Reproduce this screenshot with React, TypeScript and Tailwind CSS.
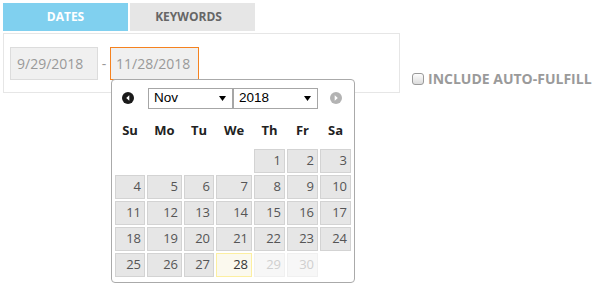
import React from "react";

const cols = ["w-[30px]", "w-[35px]", "w-[30px]", "w-[36px]", "w-[31px]", "w-[31px]", "w-[31px]"];
const heads = ["Su", "Mo", "Tu", "We", "Th", "Fr", "Sa"];

type Cell = { d: number | null; kind?: "normal" | "today" | "disabled" };

function buildRows(): Cell[][] {
  const cells: Cell[] = [];
  for (let i = 0; i < 4; i++) cells.push({ d: null });
  for (let d = 1; d <= 30; d++) {
    cells.push({ d, kind: d === 28 ? "today" : d > 28 ? "disabled" : "normal" });
  }
  while (cells.length % 7) cells.push({ d: null });
  const rows: Cell[][] = [];
  for (let i = 0; i < cells.length; i += 7) rows.push(cells.slice(i, i + 7));
  return rows;
}

function Arrow({ dir, color }: { dir: "l" | "r"; color: string }) {
  return (
    <svg width="12" height="12" viewBox="0 0 12 12">
      <circle cx="6" cy="6" r="6" fill={color} />
      {dir === "l" ? (
        <polygon points="7.3,3.3 7.3,8.7 4.2,6" fill="#fff" />
      ) : (
        <polygon points="4.7,3.3 4.7,8.7 7.8,6" fill="#fff" />
      )}
    </svg>
  );
}

function FakeSelect({ label, w }: { label: string; w: string }) {
  return (
    <div
      className={`${w} h-[21px] border border-[#a6a6a6] bg-white flex items-center justify-between pl-[5px] pr-[6px] text-[13.5px] text-black`}
      style={{ fontFamily: '"Liberation Sans", Arial, sans-serif' }}
    >
      <span>{label}</span>
      <svg width="7" height="5" viewBox="0 0 7 5">
        <polygon points="0,0 7,0 3.5,5" fill="#000" />
      </svg>
    </div>
  );
}

export default function App() {
  const rows = buildRows();
  return (
    <div
      className="w-[596px] h-[284px] bg-white relative overflow-hidden pl-[3px] pt-[3px]"
      style={{ fontFamily: '"Open Sans", sans-serif' }}
    >
      <div className="flex gap-[2px]">
        <div className="w-[125px] h-[28px] bg-[#80d0ef] text-white font-bold text-[12px] flex items-center justify-center">
          DATES
        </div>
        <div className="w-[125px] h-[28px] bg-[#e6e6e6] text-[#666] font-bold text-[12px] flex items-center justify-center pr-[8px]">
          KEYWORDS
        </div>
      </div>
      <div className="flex mt-[2px]">
        <div className="w-[397px] h-[60px] border border-[#e6e6e6] pl-[6px] pt-[13px] flex items-start relative">
          <div className="w-[88px] h-[33px] bg-[#f0f0f0] border border-[#dcdcdc] pl-[6px] flex items-center text-[14px] text-[#999]">
            9/29/2018
          </div>
          <div className="w-[12px] h-[33px] flex items-center justify-center text-[14px] text-[#999]">-</div>
          <div className="w-[89px] h-[33px] bg-[#f0f0f0] border border-[#f5821f] pl-[5px] flex items-center text-[14px] text-[#999]">
            11/28/2018
          </div>

          {/* datepicker popup */}
          <div className="absolute left-[107px] top-[45px] z-10 w-[244px] border border-[#aaa] rounded-[4px] bg-white p-[3px]">
            <div className="relative h-[30px] flex items-center">
              <div className="absolute left-[7px] top-[9px]">
                <Arrow dir="l" color="#1a1a1a" />
              </div>
              <div className="absolute left-[33px] top-[5px] flex">
                <FakeSelect label="Nov" w="w-[85px]" />
                <FakeSelect label="2018" w="w-[85px]" />
              </div>
              <div className="absolute left-[215px] top-[9px]">
                <Arrow dir="r" color="#b3b3b3" />
              </div>
            </div>
            <div className="flex gap-[2px] h-[36px] items-center">
              {heads.map((h, i) => (
                <div key={h} className={`${cols[i]} text-center font-bold text-[13px] text-[#222]`}>
                  {h}
                </div>
              ))}
            </div>
            <div className="flex flex-col gap-[2px] mb-[2px]">
              {rows.map((r, ri) => (
                <div key={ri} className="flex gap-[2px]">
                  {r.map((c, ci) => {
                    if (c.d === null) return <div key={ci} className={`${cols[ci]} h-[24px]`} />;
                    const base = `${cols[ci]} h-[24px] border flex items-center justify-end pr-[3px] text-[13px]`;
                    const cls =
                      c.kind === "today"
                        ? "bg-[#fbf9ee] border-[#fcefa1] text-[#363636]"
                        : c.kind === "disabled"
                        ? "bg-[#f7f7f7] border-[#f0f0f0] text-[#cfcfcf]"
                        : "bg-[#e6e6e6] border-[#d3d3d3] text-[#555]";
                    return (
                      <div key={ci} className={`${base} ${cls}`}>
                        {c.d}
                      </div>
                    );
                  })}
                </div>
              ))}
            </div>
          </div>
        </div>
        <div className="ml-[12px] mt-[39px] flex items-center h-[13px]">
          <div className="w-[12px] h-[12px] rounded-[3px] border border-[#9a9a9a] bg-gradient-to-b from-[#fdfdfd] to-[#dcdcdc]" />
          <span className="ml-[4px] font-bold text-[14px] text-[#9a9a9a] leading-none">INCLUDE AUTO-FULFILL</span>
        </div>
      </div>
    </div>
  );
}
